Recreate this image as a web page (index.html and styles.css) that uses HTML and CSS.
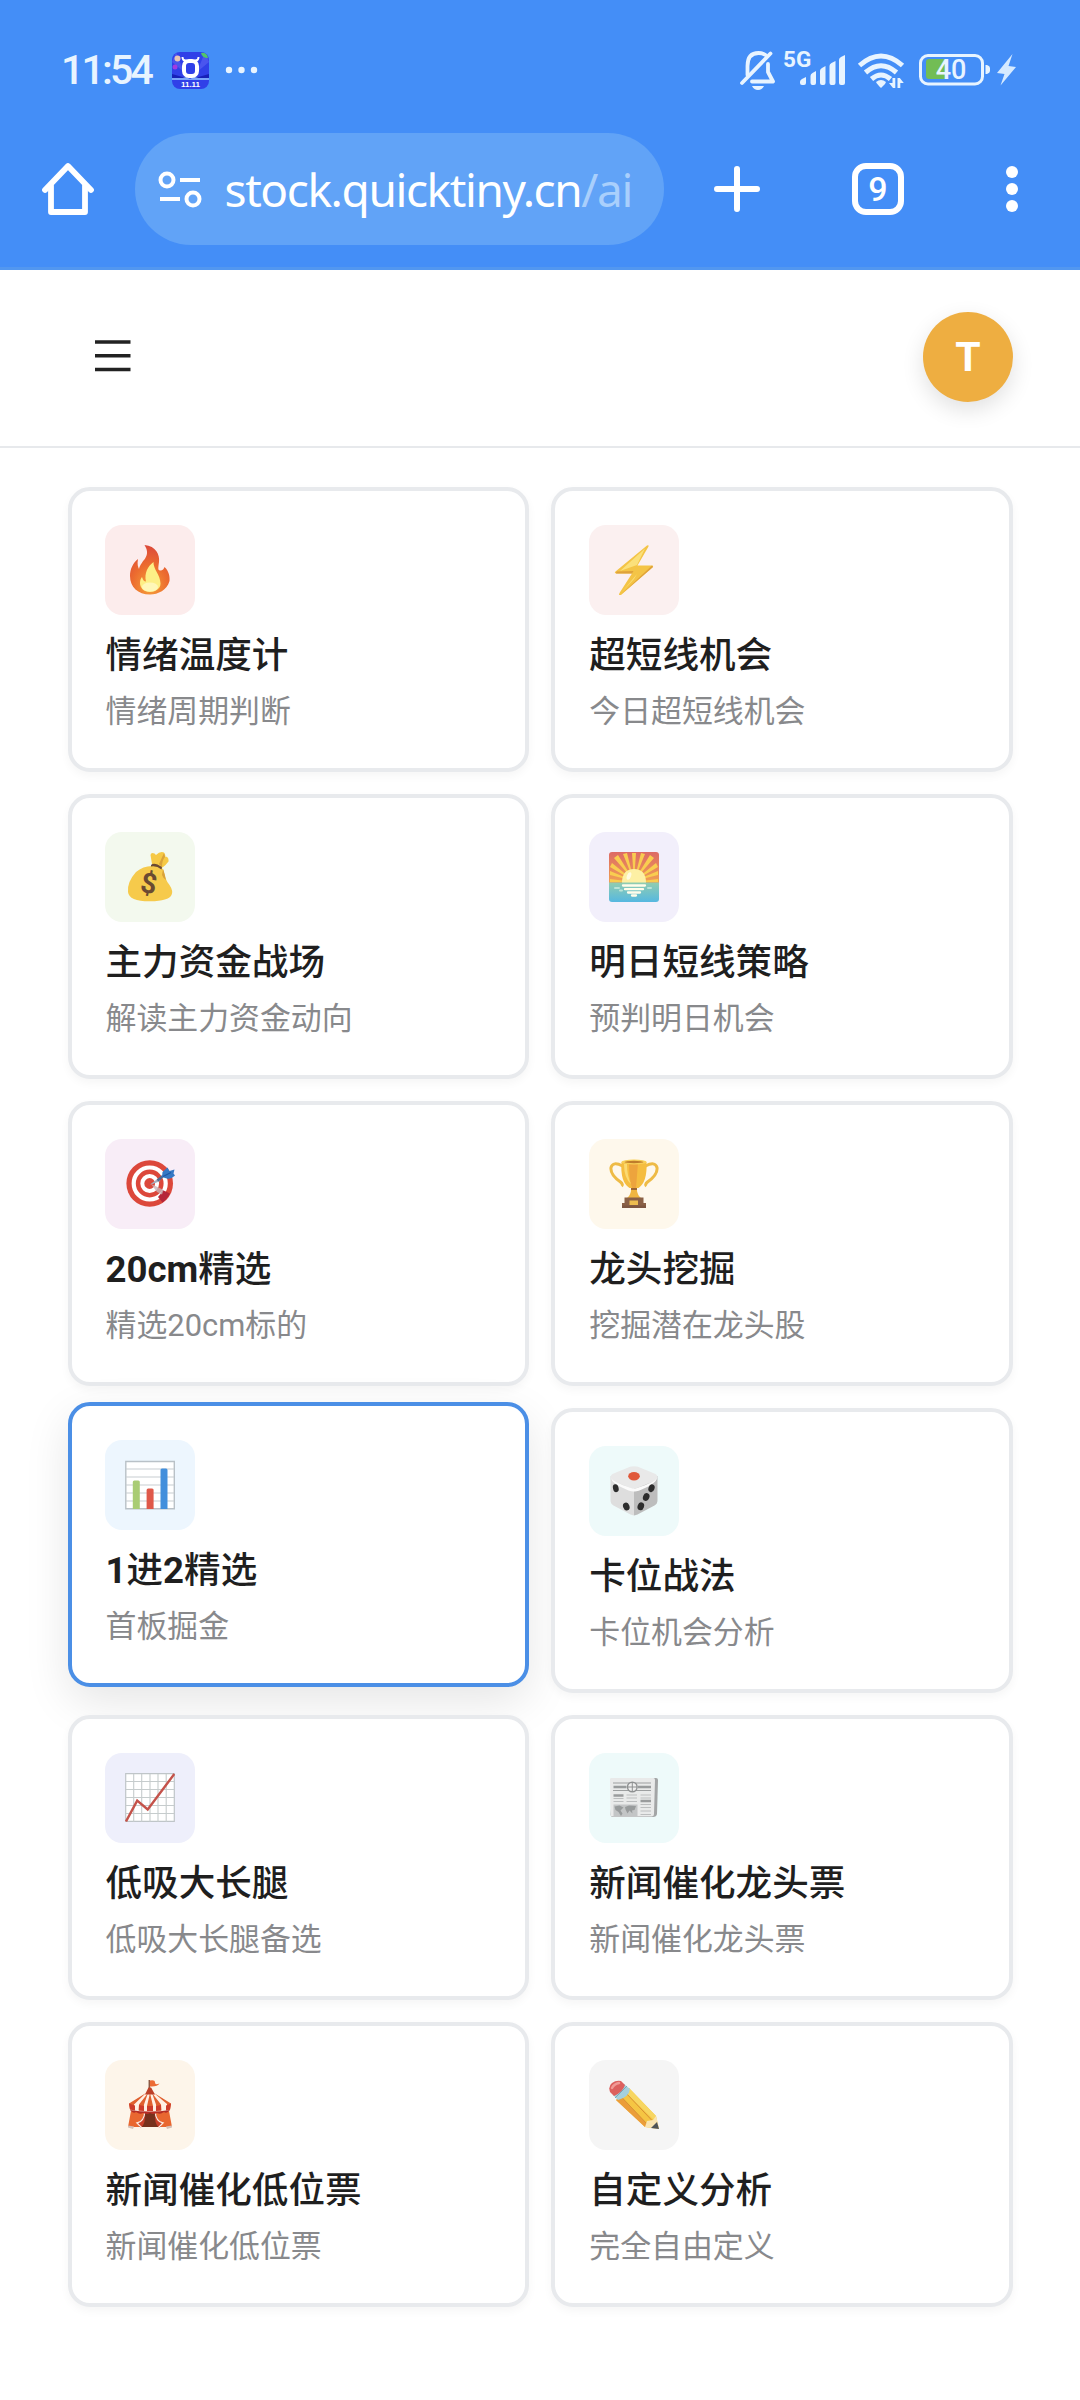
FILE: index.html
```html
<!DOCTYPE html>
<html lang="zh-CN">
<head>
<meta charset="utf-8">
<title>stock.quicktiny.cn</title>
<link rel="stylesheet" href="styles.css">
</head>
<body>
<div class="browser">
  <div class="status">
    <span class="clock">11:54</span>
    <svg class="app-icon" width="37" height="37" viewBox="0 0 37 37">
      <defs><clipPath id="app"><rect width="37" height="37" rx="8"/></clipPath></defs>
      <g clip-path="url(#app)">
        <rect width="37" height="37" fill="#3040e8"/>
        <path d="M0 10l12 10L4 0zM37 10L25 20 33 0z" fill="#4a55ee"/>
        <path d="M0 25h14l4 2 4-2h15v3H0z" fill="#7aa4fa"/>
        <path d="M0 22l14 4H0zM37 22l-14 4h14z" fill="#1720b8"/>
        <circle cx="5.500" cy="6.500" r="3" fill="#e8c4b4"/>
        <circle cx="3" cy="15" r="2.500" fill="#a23be0"/>
        <path d="M29 1q6-1 7 5-6 0-7-5z" fill="#52c46a"/>
        <rect x="12" y="9" width="13" height="15" rx="5" fill="none" stroke="#fff" stroke-width="4"/>
        <path d="M10.500 5q0 4 4 3.500M26.500 5q0 4-4 3.500" fill="none" stroke="#fff" stroke-width="2"/>
      </g>
      <text class="app-date" x="18.500" y="35.300" text-anchor="middle">11.11</text>
    </svg>
    <svg class="more" width="34" height="8" viewBox="0 0 34 8" fill="#e8f4ff"><circle cx="4" cy="4" r="3.200"/><circle cx="16.500" cy="4" r="3.200"/><circle cx="29" cy="4" r="3.200"/></svg>
    <svg class="tray" width="280" height="44" viewBox="738 48 280 44" fill="#e8f4ff">
      <g fill="none" stroke="#e8f4ff" stroke-width="3.800" stroke-linecap="round" stroke-linejoin="round">
        <path d="M747.500 75V66q0-13 11-13 4 0 7 2M768 64v8l5 9.500H752"/>
        <path d="M742 83l28.500-29.500"/>
      </g>
      <path d="M752 86h12q-2 4-6 4t-6-4z"/>
      <text class="net" x="783" y="67.300">5G</text>
      <path d="M800 82q0-2 2-3l4-2v6q0 2-2 2h-2q-2 0-2-2zM810.500 76q0-2 2-3l3.500-2v12q0 2-2 2h-1.500q-2 0-2-2zM820 71q0-2 2-3l3.500-2v17q0 2-2 2H822q-2 0-2-2zM829.500 66q0-2 2-3l4-2v22q0 2-2 2h-2q-2 0-2-2zM839 60q0-2 2-3l4-2v28q0 2-2 2h-2q-2 0-2-2z"/>
      <g fill="none" stroke="#e8f4ff" stroke-width="5">
        <path d="M859.500 65.500q21.500-19 43 0M865.500 72.500q15.500-13.500 31 0M871.500 79q9.500-8 19 0"/>
      </g>
      <path d="M876 82q5-4 10 0l-1 2-4 4q-4-4-5-6z"/>
      <path d="M892.500 78h2.800v10h-2.300l-4-5h3.500zM897.500 88V78h2.300l4 5h-3.500v5z"/>
      <rect x="920.500" y="55.500" width="62" height="28.500" rx="7.500" fill="none" stroke="#e8f4ff" stroke-width="3"/>
      <path d="M929 59h17v20h-17q-3 0-3-3V62q0-3 3-3z" fill="#72bd55"/>
      <path d="M985.500 65h1.500q3 1 3 3v3q0 2-3 3h-1.500z"/>
      <text class="level" x="951" y="79" text-anchor="middle">40</text>
      <path d="M1012.500 54l-15.500 19 7.500 1-4 11.500 15.500-18.500-7.500-1z" fill="#d6eaff"/>
    </svg>
  </div>
  <div class="toolbar">
    <svg class="home" width="52" height="54" viewBox="0 0 52 54" fill="none" stroke="#fff" stroke-width="5.800" stroke-linejoin="round" stroke-linecap="round"><path d="M3 28L26 4l23 24"/><path d="M9 24v26h34V24" /></svg>
    <div class="address">
      <svg class="tune" width="44" height="38" viewBox="0 0 44 38" fill="none" stroke="#fff" stroke-width="4"><circle cx="9" cy="10" r="6.500"/><circle cx="35" cy="29" r="6.500"/><path d="M22 10h20M2 29h20"/></svg>
      <span class="host">stock.quicktiny.cn</span><span class="path">/ai</span>
    </div>
    <svg class="plus" width="46" height="46" viewBox="0 0 46 46" stroke="#fff" stroke-width="6" stroke-linecap="round"><path d="M23 3v40M3 23h40"/></svg>
    <div class="tabs">9</div>
    <svg class="dots" width="12" height="48" viewBox="0 0 12 48" fill="#fff"><circle cx="6" cy="7" r="6"/><circle cx="6" cy="24" r="6"/><circle cx="6" cy="41" r="6"/></svg>
  </div>
</div>

<header class="site-header">
  <svg class="menu" width="36" height="36" viewBox="0 0 36 36" stroke="#222" stroke-width="3.400"><path d="M0 3h35.500M0 16.700h35.500M0 30.500h35.500"/></svg>
  <div class="avatar">T</div>
</header>

<main class="grid">
  <article class="card">
    <div class="icon red"><svg width="50" height="50" viewBox="0 0 50 50">
      <defs><radialGradient id="fl" cx=".5" cy=".85" r=".9"><stop offset="0" stop-color="#f6a13a"/><stop offset=".5" stop-color="#ec6c2f"/><stop offset="1" stop-color="#d9443c"/></radialGradient></defs>
      <path d="M19.500 0C31 1 35 10 34 17C33 24 33 25 35 25.500C37 26 39 24 39.500 22C44 26 45 32 44.500 36C42 45 33 49.500 25 49.500C13 49.500 5 42 5 31C5 24 8 18 13 14C12 19 13 22 14 24C16 15 27 12 19.500 0z" fill="url(#fl)"/>
      <path d="M28.500 17C28 24 35.500 30 35.500 38.500C35.500 44 30 47 25 47C19 47 15 43 15 38C15 35 16 33 17 32C18 35 19 36.500 21 36.500C19 28 23 21 28.500 17z" fill="#fdef86"/>
      <ellipse cx="25" cy="42" rx="8" ry="4.500" fill="#fff7b8"/>
    </svg></div>
    <h2>情绪温度计</h2><p>情绪周期判断</p>
  </article>
  <article class="card">
    <div class="icon rose"><svg width="50" height="50" viewBox="0 0 50 50">
      <path d="M38 .5q2-1 1.500 1L28.500 20.500H43q2 0 .5 2L12 50q-3 1-1.500-2L23 28.500H7q-2-.5-.5-2z" fill="#f4c446"/>
      <path d="M36 3.500L11 26l17-6zM28 29L13 47l12-13z" fill="#fbe07a"/>
      <path d="M7 28.500h16l1.500-2.500-17 .5zM43 20.500L12 49.500 44 22z" fill="#dfa23b"/>
    </svg></div>
    <h2>超短线机会</h2><p>今日超短线机会</p>
  </article>
  <article class="card">
    <div class="icon green"><svg width="50" height="50" viewBox="0 0 50 50">
      <path d="M27 12L25.500 3q.5-3 4-1.500L31 3q4-4 8-2.500 2 3 1 4 4 0 3.500 5-3 4-6 6z" fill="#f6c945"/>
      <path d="M34 12l5-11 1 4q-3 3-3 10z" fill="#d9a23a"/>
      <path d="M27 14q8-1 11.500 4 1 9 6 15 4 6 2 10-3 6-21 6.300Q4 49.500 3 40 2 30 11 20 18 14 27 14z" fill="#f6ca4b"/>
      <path d="M38 17q2 5 3 11-3-2-4-5z" fill="#d9a23a"/>
      <path d="M26 13q3-3.500 11 2l-.5 2.500q-5-4-10.500-3z" fill="#6b4a32"/>
      <text class="dollar" x="24" y="41" text-anchor="middle" transform="rotate(10 24 31)">$</text>
    </svg></div>
    <h2>主力资金战场</h2><p>解读主力资金动向</p>
  </article>
  <article class="card">
    <div class="icon violet"><svg width="50" height="50" viewBox="0 0 50 50">
      <defs>
        <linearGradient id="sky" x2="0" y2="1"><stop offset="0" stop-color="#dd6a65"/><stop offset="1" stop-color="#f0a253"/></linearGradient>
        <linearGradient id="sea" x2="0" y2="1"><stop offset="0" stop-color="#91cdb0"/><stop offset="1" stop-color="#56b8e0"/></linearGradient>
        <clipPath id="sun"><rect width="50" height="50" rx="3"/></clipPath>
      </defs>
      <g clip-path="url(#sun)">
        <path fill="url(#sky)" d="M0 0h50v31H0z"/>
        <path d="M25 29L23 1h4zM25 29L14 2l4-1zM25 29L36 2l-4-1zM25 29L5 6l4-3zM25 29L45 6l-4-3zM25 29L1 15l2-4zM25 29l24-14-2-4zM25 29L1 23v-4zM25 29l24-6v-4zM25 30L1 30v-3zM25 30h24v-3z" fill="#f9cd50"/>
        <path d="M13 31q0-14 12-14t12 14z" fill="#fdf0a4"/><ellipse cx="20" cy="24" rx="2" ry="4" transform="rotate(20 20 24)" fill="#fffbe0"/>
        <path fill="url(#sea)" d="M0 30.500h50V50H0z"/>
        <path d="M14 33.500h22M16 37.200h18M19 40.500h12M23 43.500h4" stroke="#fffdea" stroke-width="2.300" stroke-linecap="round"/>
        <path d="M6 36h4M39 36h3M11 38.500h2" stroke="#b9e4d8" stroke-width="2" stroke-linecap="round"/>
      </g>
    </svg></div>
    <h2>明日短线策略</h2><p>预判明日机会</p>
  </article>
  <article class="card">
    <div class="icon pink"><svg width="50" height="50" viewBox="0 0 50 50" overflow="visible">
      <g fill="none"><circle cx="24.700" cy="24.500" r="23.300" fill="#dc483b"/><circle cx="24.700" cy="24.500" r="16" stroke="#fff" stroke-width="4.200"/><circle cx="24.700" cy="24.500" r="7.400" stroke="#fff" stroke-width="4"/></g>
      <path d="M33 38q3-3 4.500-7l7.500 3.500q-3 6-7.500 9z" fill="#b5263a"/>
      <path d="M26 25l6 8 5 2.500 1.500-4.500-6-3z" fill="#c9b4b8" opacity=".8"/>
      <path d="M25 25.500l8-6 2.500 2.500-8 3z" fill="#a5afbf"/><path d="M32.500 21.500l5.500-4.500" stroke="#4d6a90" stroke-width="2.600"/>
      <path d="M37 18l.5-5 5-4.500 2 3.500 5-1.500-1 4 1.500 2q-4 4-7.500 3.200z" fill="#3578c4"/><path d="M38 17.500l8-4" stroke="#1f57a0" stroke-width="1.200"/>
    </svg></div>
    <h2><b>20cm</b>精选</h2><p>精选20cm标的</p>
  </article>
  <article class="card">
    <div class="icon amber"><svg width="50" height="50" viewBox="0 0 50 50">
      <path d="M13.500 7Q4 2 2 8.500q-1 7 9.500 14.500 3 2.500 1 4M36.500 7Q46 2 48 8.500q1 7-9.500 14.500-3 2.500-1 4" fill="none" stroke="#eebb46" stroke-width="3"/>
      <path d="M12.500 3h25q1 20-8 26h-9Q11 23 12.500 3z" fill="#f5bd40"/>
      <path d="M20 4h9l-2 25h-4Q20 20 20 4z" fill="#eda43d"/><path d="M15 5h3q0 12 4 20-7-6-7-20z" fill="#fbda72"/>
      <ellipse cx="25" cy="3" rx="12.500" ry="2.500" fill="#f8cf58"/><ellipse cx="25" cy="3" rx="9.500" ry="1.200" fill="#bf7c2b"/>
      <path d="M22 29h6v3q1 5 4 7H18q3-2 4-7z" fill="#efb542"/><path d="M22 29h6v2h-6z" fill="#9e6630"/>
      <path d="M15.500 38.500h19V44H37v5H13v-5h2.500z" fill="#8a6046"/><path d="M13 46.500h24V49H13z" fill="#7d5641"/>
      <rect x="20.500" y="41.500" width="8.500" height="4.500" fill="#edbd50"/>
    </svg></div>
    <h2>龙头挖掘</h2><p>挖掘潜在龙头股</p>
  </article>
  <article class="card active">
    <div class="icon blue"><svg width="50" height="50" viewBox="0 0 50 50">
      <path d="M.8 1.500h48.500v47.300H.8z" fill="#fff" stroke="#b9c1c7" stroke-width="1.400"/>
      <path d="M1 9h48M1 17h48M1 25h48M1 33h48M1 41h48" stroke="#c7cdd1" stroke-width="1"/>
      <path d="M7.800 49V22q0-1.500 1.500-1.500h4q1.500 0 1.500 1.500v27z" fill="#a9cc74"/>
      <path d="M21.600 49V30q0-1.500 1.500-1.500h4q1.500 0 1.500 1.500v19z" fill="#df594a"/>
      <path d="M35.500 49V10q0-1.500 1.500-1.500h4q1.500 0 1.500 1.500v39z" fill="#428fdc"/>
    </svg></div>
    <h2><b>1</b>进<b>2</b>精选</h2><p>首板掘金</p>
  </article>
  <article class="card">
    <div class="icon cyan"><svg width="50" height="50" viewBox="0 0 50 50">
      <path d="M25 22L1.500 10v24q0 4 3 5.500l17 9q3 1 3.500 1z" fill="#dedede"/>
      <path d="M25 22l23.500-12v24q0 4-3 5.500l-17 9q-3 1-3.500 1z" fill="#bdbdbd"/>
      <path d="M1.500 12q0-3 2-4L21 .8q4-1.300 8 0L46.500 8q2 1 2 4-1 2-3 3L28 22q-3 1-6 0L4.500 15q-2-1-3-3z" fill="#e9e9e9"/>
      <path d="M2 12q2 4 20 10 3 1 6 0 18-6 20-10-1 5-12 10-8 4-11 3.500Q22 26 14 22 3 17 2 12z" fill="#fbfbfb"/>
      <ellipse cx="25" cy="10.300" rx="5.800" ry="4.200" fill="#e0583a"/>
      <g fill="#2d2d2d"><ellipse cx="6.800" cy="22.200" rx="2.800" ry="4" transform="rotate(-15 6.800 22.200)"/><ellipse cx="17.300" cy="40.500" rx="3.200" ry="4" transform="rotate(-20 17.300 40.500)"/><ellipse cx="42.500" cy="22.200" rx="3" ry="4" transform="rotate(20 42.500 22.200)"/><ellipse cx="37.200" cy="31" rx="3.200" ry="4" transform="rotate(20 37.200 31)"/><ellipse cx="31.800" cy="40.300" rx="3.200" ry="4" transform="rotate(20 31.800 40.300)"/></g>
    </svg></div>
    <h2>卡位战法</h2><p>卡位机会分析</p>
  </article>
  <article class="card">
    <div class="icon indigo"><svg width="50" height="50" viewBox="0 0 50 50">
      <path d="M.7.700h48.600v47.600H.7z" fill="#fff" stroke="#bfc5c8" stroke-width="1.200"/>
      <path d="M8.700 1v48M16.700 1v48M25 1v48M33 1v48M41.200 1v48M1 8.500h48M1 16.500h48M1 24.500h48M1 32.500h48M1 40.500h48" stroke="#c6cccd" stroke-width="1.100"/>
      <path d="M1 48.500l11.200-20.800 10.500 8.800L49.300 1" fill="none" stroke="#c4524a" stroke-width="2.400"/>
    </svg></div>
    <h2>低吸大长腿</h2><p>低吸大长腿备选</p>
  </article>
  <article class="card">
    <div class="icon cyan"><svg width="50" height="50" viewBox="0 0 50 50">
      <path d="M5 5h42q2 0 2 2l-1 34q-.5 3-4 3H4q-2.500 0-2.500-3z" fill="#a3a5a6"/>
      <path d="M2 5h42.500q1.500 0 1.500 2l-1 34q0 2-2 2.500H4Q1.500 43.500 1.500 41L1 6.500Q1 5 2 5z" fill="#e9eaea"/>
      <path d="M4 10h38M4 17.500h38" stroke="#9d9fa0" stroke-width="1"/><path d="M4.500 14h13M29 14h13" stroke="#999c9d" stroke-width="2.600"/>
      <circle cx="23.300" cy="14" r="4.800" fill="#eee" stroke="#8e9091" stroke-width="1.400"/><path d="M18.500 14h9.500M23.300 9v10" stroke="#8e9091" stroke-width="1"/>
      <path d="M4.500 22.500h10M31.500 28h10.500" stroke="#9a9c9d" stroke-width="2.600"/>
      <path d="M17.500 22h10.500M31.500 22h10.500M17.500 25h10.500M31.500 25h10.500M4.500 25.500h10M4.500 28.500h10M17.500 28.500h10.500M31.500 31.500h10.500M31.500 34.500h10.500M31.500 38h10.500M31.500 41.500h10.500" stroke="#bcbebf" stroke-width="1"/>
      <path d="M4.500 31.500h24v11.800h-24z" fill="#c3c5c6"/><path d="M5.500 33.500l5-1 4 2-3 3 2 3-1.500 2.500-2.500-4-3-2zM16 34l4-1.500 7 .5-1.500 4-2.500.5.500 3-3-3-2 3-2-4z" fill="#989b9c"/>
    </svg></div>
    <h2>新闻催化龙头票</h2><p>新闻催化龙头票</p>
  </article>
  <article class="card">
    <div class="icon orange"><svg width="50" height="50" viewBox="0 0 50 50">
      <path d="M24.300 0v9" stroke="#8d5a44" stroke-width="1.500"/><path d="M25 .5q5-1 5 2t4.500 1q-2 3.500-9.500 3z" fill="#ec6b35"/>
      <path d="M6 31h38l3 16H3z" fill="#e96730"/>
      <path d="M3 45.500l6 1-1 2.500-5-1.500zM47 45.500l-6 1 1 2.500 5-1.500z" fill="#d5c0b7"/>
      <path d="M20 32h10l6 15H14z" fill="#76311d"/>
      <path d="M20 32q1 11-4 16l-4-5q7-3 8-11zM30 32q-1 11 4 16l4-5q-7-3-8-11z" fill="#c73f2a"/>
      <path d="M20 31q-1 11-8 12l5 5M30 31q1 11 8 12l-5 5" fill="none" stroke="#fbe9df" stroke-width="1.300"/>
      <path d="M24 8h2q2 6 20 16l-1 7q-20 4-40 0l-1-7Q22 14 24 8z" fill="#fff0e4"/>
      <path d="M24 8h2l2 5h-6zM21 13L4 23.500l1 6h4v-5zM23 13l-9 11.500-.5 6h5l.5-6zM25 13l-3 13v5h6v-5zM27 13l4 11.500.5 6h5l-.5-6zM29 13l13 11v6h3l1-6.500z" fill="#e0602f"/>
      <path d="M4 23.500l6 2v5l-5-1zM14 25l5 1v5l-5-.5zM22 26h6v5h-6zM36 25l-5 1v5l5-.5zM46 23.500l-5 2v5l4-1z" fill="#cd3c2b"/>
      <path d="M23.500 7.500h2.500l4 7H20z" fill="#bd4028"/>
      <path d="M5 30q3 4 6 2 4 3 7 1 5 2 7 0 3 2 7 0 3 2 7-1 3 2 6-2-20 3-40 0z" fill="#b52d24"/>
    </svg></div>
    <h2>新闻催化低位票</h2><p>新闻催化低位票</p>
  </article>
  <article class="card">
    <div class="icon gray"><svg width="50" height="50" viewBox="0 0 50 50">
      <path d="M7 20L20 8l27 28q1.500 7 3 13-7-1-14-2z" fill="#f5c543"/>
      <path d="M7 20l4.500-4 28 29.500L36 47z" fill="#eb9d3a"/><path d="M16 12l4-4 27 28-2 4z" fill="#f7d661"/>
      <path d="M11.500 16l28 29.500M16 12l27.500 29" stroke="#d89134" stroke-width="1"/>
      <path d="M36 47l2-6 6-1 3-4q2 6 3 13z" fill="#f9e4b1"/><path d="M42 48l6-6 2 7z" fill="#4e5357"/>
      <path d="M4 15L15 4l6 5q-1 8-12 11z" fill="#a5d0dd"/><path d="M6 18L18 6" stroke="#75aaba" stroke-width="1"/>
      <path d="M1 12Q-1 6 3 3t9-2l4 4q-2 7-11 11z" fill="#dc605e"/><path d="M3 8q2-4 7-5" stroke="#f09a96" stroke-width="2.500" fill="none" stroke-linecap="round"/>
    </svg></div>
    <h2>自定义分析</h2><p>完全自由定义</p>
  </article>
</main>
</body>
</html>
```
FILE: styles.css
```css
* { box-sizing: border-box; }
body {
  margin: 0;
  width: 1080px;
  min-height: 2400px;
  background: #fff;
  font-family: Roboto, "Noto Sans CJK SC", sans-serif;
  color: #1f1f1f;
}
svg { display: block; flex: none; }

/* Browser chrome */
.browser {
  height: 270px;
  background: #448ef7;
  border-bottom: 3px solid #5297f0;
  color: #fff;
}
.status {
  display: flex;
  align-items: center;
  height: 133px;
  padding: 7px 62px 0 61px;
}
.clock {
  width: 92px;
  font: 500 41px/44px Roboto, sans-serif;
  letter-spacing: -2.8px;
  color: #e8f4ff;
  white-space: nowrap;
}
.app-icon { margin-left: 19px; }
.app-date { font: 700 8px "Liberation Sans", sans-serif; fill: #fff; }
.more { margin-left: 16px; }
.tray { margin-left: auto; }
.net { font: 700 22.5px Roboto, sans-serif; }
.level { font: 500 27px Roboto, sans-serif; }
.toolbar {
  display: flex;
  align-items: center;
  height: 112px;
  padding-left: 42px;
}
.address {
  display: flex;
  align-items: center;
  width: 529px;
  height: 112px;
  margin-left: 41px;
  padding-left: 23px;
  border-radius: 56px;
  background: #61a3f7;
  font: 400 46px/60px "Noto Sans", sans-serif;
  letter-spacing: -1.4px;
  white-space: nowrap;
}
.host { margin-left: 22.5px; }
.path { color: #a9cffc; }
.plus { margin-left: 50px; }
.tabs {
  display: flex;
  align-items: center;
  justify-content: center;
  width: 52px;
  height: 52px;
  margin-left: 92px;
  border: 6px solid #fff;
  border-radius: 14px;
  font: 500 34px/40px Roboto, sans-serif;
}
.dots { margin-left: 102px; }

/* Site header */
.site-header {
  display: flex;
  align-items: center;
  justify-content: space-between;
  height: 178px;
  padding: 0 67px 2px 95px;
  border-bottom: 2px solid #e7e9ec;
}
.avatar {
  width: 90px;
  height: 90px;
  border-radius: 50%;
  background: #eeae41;
  box-shadow: 0 8px 22px rgba(0, 0, 0, .12);
  color: #fff;
  font: 700 41px/90px Roboto, sans-serif;
  text-align: center;
}

/* Card grid */
.grid {
  display: grid;
  grid-template-columns: 1fr 1fr;
  grid-auto-rows: 284.5px;
  gap: 22.5px;
  padding: 39px 67.5px 0;
}
.card {
  position: relative;
  padding: 34px 33.5px;
  border: 4px solid #e8eaed;
  border-radius: 22px;
  background: #fff;
  box-shadow: 0 4px 10px rgba(0, 0, 0, .04);
}
.card.active {
  border-color: #4b8fe6;
  box-shadow: 0 15px 45px rgba(0, 0, 0, .1);
  transform: translateY(-6px);
}
.icon {
  display: flex;
  align-items: center;
  justify-content: center;
  width: 90px;
  height: 90px;
  border-radius: 17px;
}
.dollar { font: 700 28px Roboto, sans-serif; fill: #6b4a32; }
.card h2 {
  margin: 16.5px 0 0 .5px;
  font-size: 36.6px;
  font-weight: 500;
  line-height: 48px;
}
.card h2 b { font-weight: 700; }
.card p {
  margin: 13.5px 0 0 .5px;
  font-size: 30.9px;
  line-height: 38px;
  color: #88898c;
}
.red { background: #fcecec; }
.rose { background: #fbf0f0; }
.green { background: #f3f9ee; }
.violet { background: #f2effb; }
.pink { background: #f8edf7; }
.amber { background: #fef8ec; }
.blue { background: #edf6fe; }
.cyan { background: #eefafa; }
.indigo { background: #eeeffb; }
.orange { background: #fdf5ea; }
.gray { background: #f5f5f5; }
```
